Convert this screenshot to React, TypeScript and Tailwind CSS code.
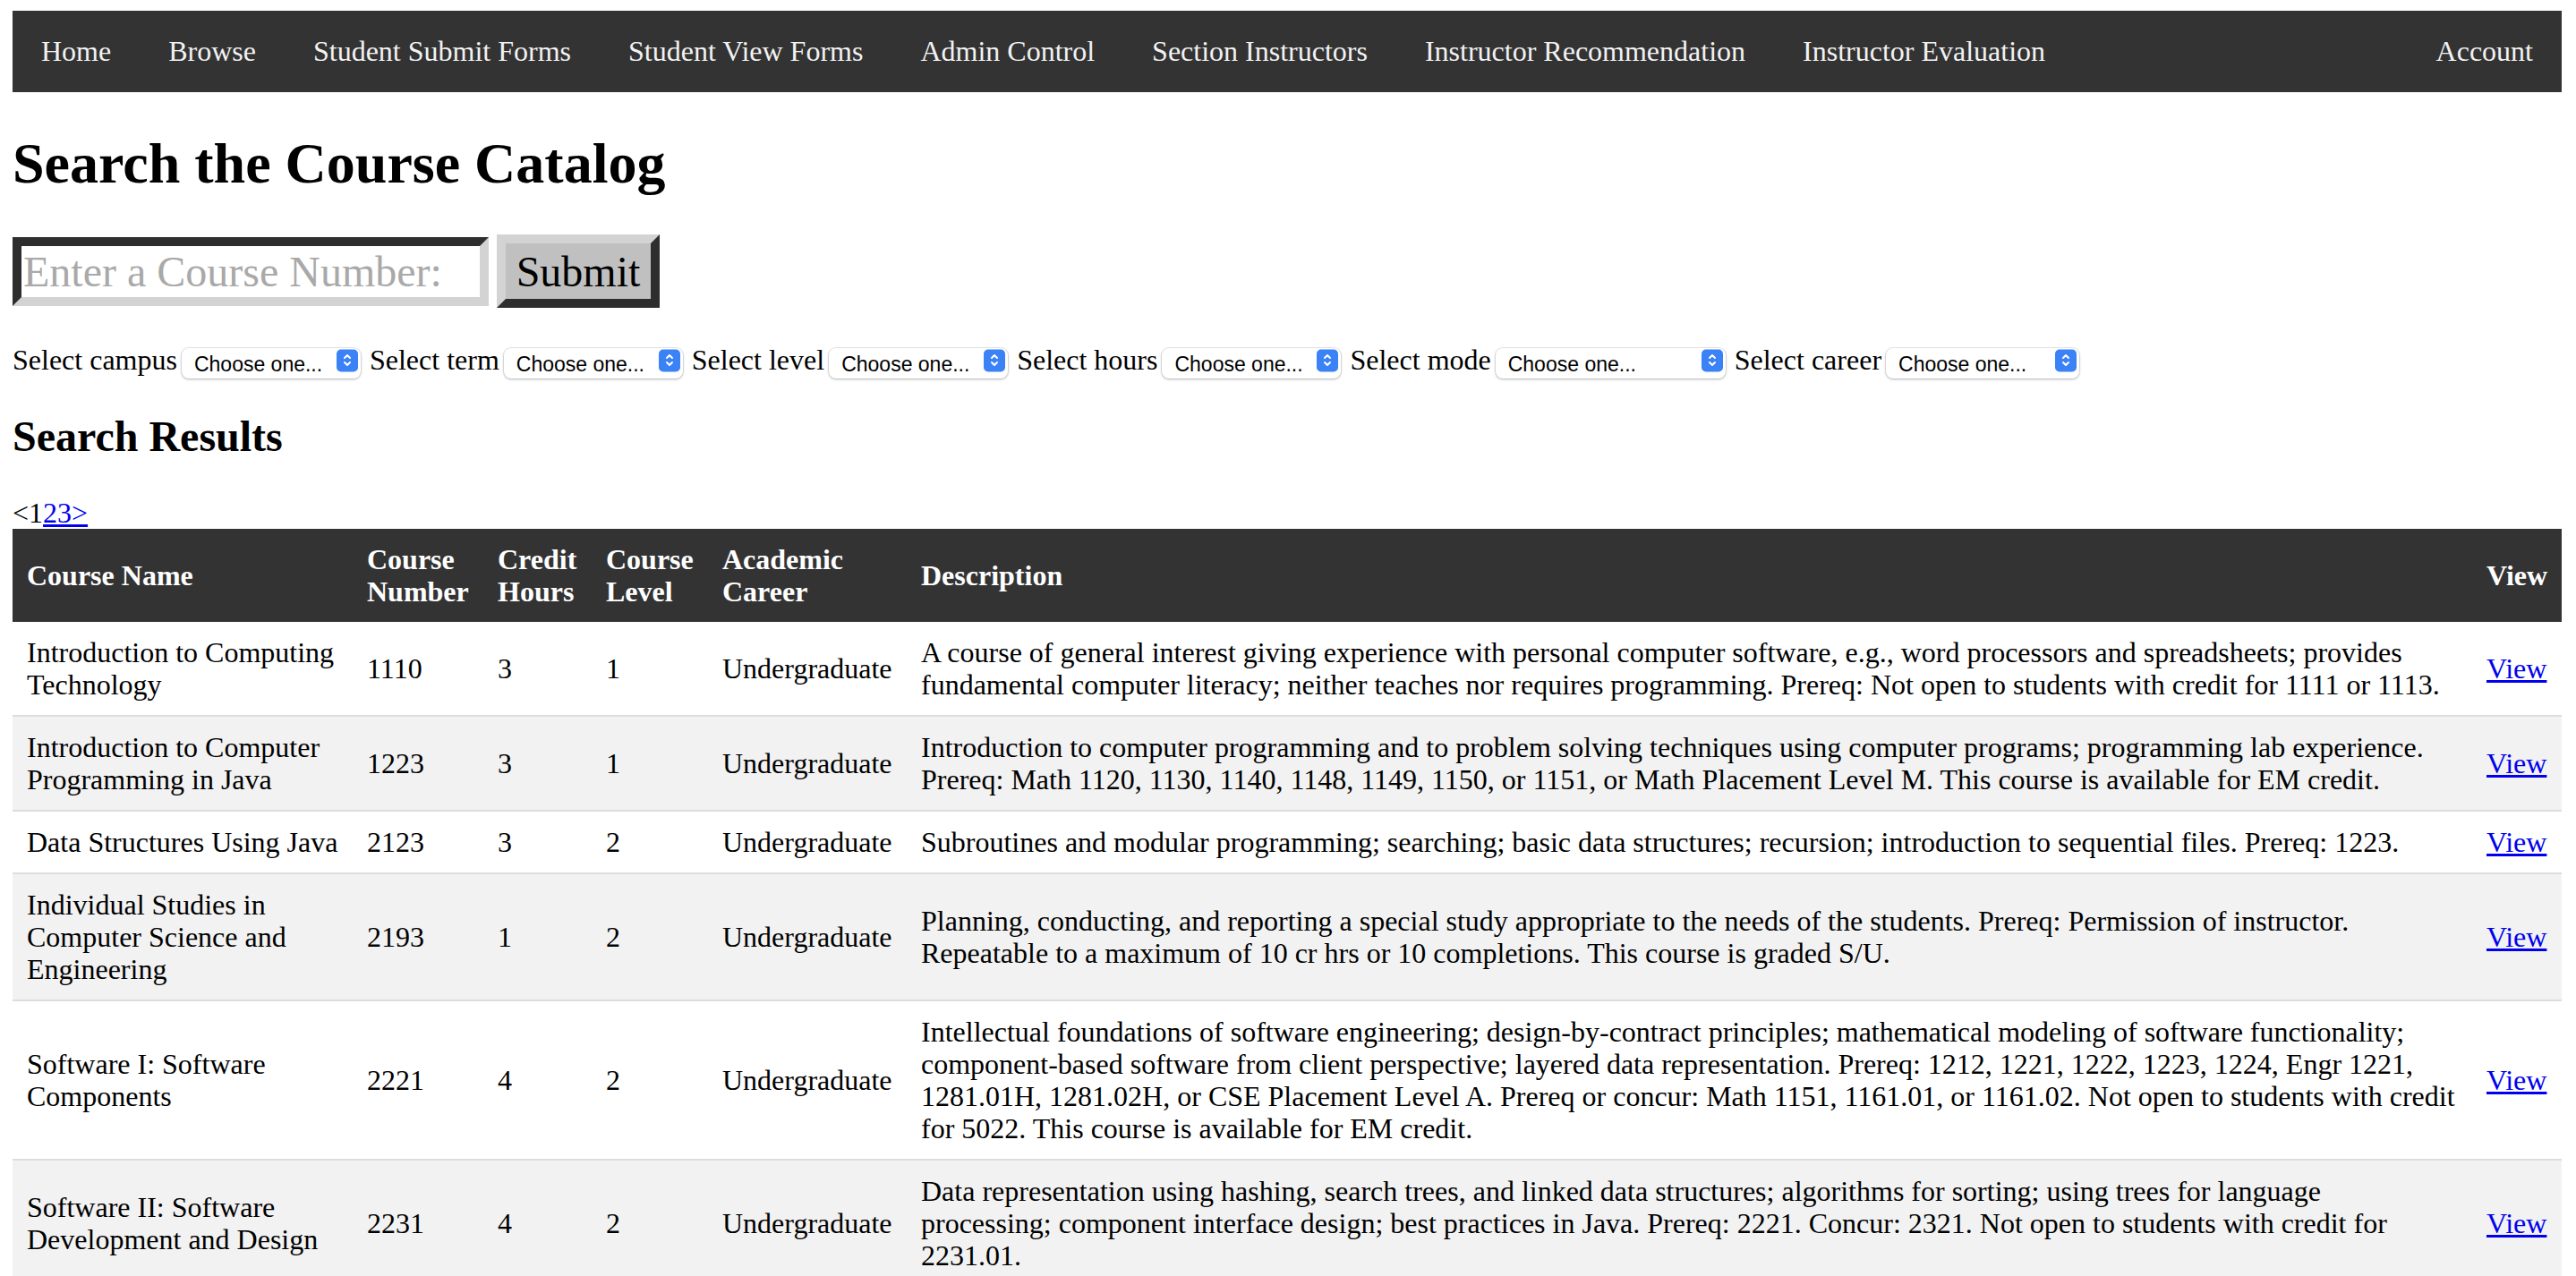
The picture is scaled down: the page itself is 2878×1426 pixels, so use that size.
import React from "react";

const navLinks = [
  "Home",
  "Browse",
  "Student Submit Forms",
  "Student View Forms",
  "Admin Control",
  "Section Instructors",
  "Instructor Recommendation",
  "Instructor Evaluation",
];

const filters = [
  { label: "Select campus", width: "w-[200px]" },
  { label: "Select term", width: "w-[200px]" },
  { label: "Select level", width: "w-[200px]" },
  { label: "Select hours", width: "w-[200px]" },
  { label: "Select mode", width: "w-[257px]" },
  { label: "Select career", width: "w-[216px]" },
];

const courses = [
  {
    name: "Introduction to Computing Technology",
    number: "1110",
    hours: "3",
    level: "1",
    career: "Undergraduate",
    description:
      "A course of general interest giving experience with personal computer software, e.g., word processors and spreadsheets; provides fundamental computer literacy; neither teaches nor requires programming. Prereq: Not open to students with credit for 1111 or 1113.",
  },
  {
    name: "Introduction to Computer Programming in Java",
    number: "1223",
    hours: "3",
    level: "1",
    career: "Undergraduate",
    description:
      "Introduction to computer programming and to problem solving techniques using computer programs; programming lab experience. Prereq: Math 1120, 1130, 1140, 1148, 1149, 1150, or 1151, or Math Placement Level M. This course is available for EM credit.",
  },
  {
    name: "Data Structures Using Java",
    number: "2123",
    hours: "3",
    level: "2",
    career: "Undergraduate",
    description:
      "Subroutines and modular programming; searching; basic data structures; recursion; introduction to sequential files. Prereq: 1223.",
  },
  {
    name: "Individual Studies in Computer Science and Engineering",
    number: "2193",
    hours: "1",
    level: "2",
    career: "Undergraduate",
    description:
      "Planning, conducting, and reporting a special study appropriate to the needs of the students. Prereq: Permission of instructor. Repeatable to a maximum of 10 cr hrs or 10 completions. This course is graded S/U.",
  },
  {
    name: "Software I: Software Components",
    number: "2221",
    hours: "4",
    level: "2",
    career: "Undergraduate",
    description:
      "Intellectual foundations of software engineering; design-by-contract principles; mathematical modeling of software functionality; component-based software from client perspective; layered data representation. Prereq: 1212, 1221, 1222, 1223, 1224, Engr 1221, 1281.01H, 1281.02H, or CSE Placement Level A. Prereq or concur: Math 1151, 1161.01, or 1161.02. Not open to students with credit for 5022. This course is available for EM credit.",
  },
  {
    name: "Software II: Software Development and Design",
    number: "2231",
    hours: "4",
    level: "2",
    career: "Undergraduate",
    description:
      "Data representation using hashing, search trees, and linked data structures; algorithms for sorting; using trees for language processing; component interface design; best practices in Java. Prereq: 2221. Concur: 2321. Not open to students with credit for 2231.01.",
  },
];

function SelectBox({ width }: { width: string }) {
  return (
    <div className={`relative h-[34px] ${width}`}>
      <select className="h-full w-full appearance-none rounded-[8px] bg-white pl-[14px] pr-[32px] font-['Liberation_Sans',Arial,sans-serif] text-[23px] text-black shadow-[0_0_0_1px_rgba(0,0,0,0.08),0_1px_3px_rgba(0,0,0,0.25)] outline-none">
        <option>Choose one...</option>
      </select>
      {/* blue up/down indicator */}
      <span className="pointer-events-none absolute right-[3px] top-1/2 flex h-[25px] w-[24px] -translate-y-1/2 items-center justify-center rounded-[5px] bg-[#3b82f7]">
        <svg width="20" height="22" viewBox="0 0 20 22" fill="none" stroke="white" strokeWidth="2" strokeLinecap="round" strokeLinejoin="round">
          <path d="M7 8.5l3-3 3 3" />
          <path d="M7 13.5l3 3 3-3" />
        </svg>
      </span>
    </div>
  );
}

export default function App() {
  return (
    <div className="min-h-screen bg-white pt-[12px] pl-[14px] pr-[16px] font-['Liberation_Serif','Times_New_Roman',serif] text-[32px] text-black">
      {/* Top nav */}
      <nav className="flex bg-[#333333] text-[#f2f2f2]">
        {navLinks.map((l) => (
          <a key={l} className="px-[32px] py-[27px] leading-[37px]">
            {l}
          </a>
        ))}
        <a className="ml-auto px-[32px] py-[27px] leading-[37px]">Account</a>
      </nav>

      <h1 className="mt-[43px] mb-[42px] text-[64px] font-bold leading-[74px]">Search the Course Catalog</h1>

      {/* Search form */}
      <form className="flex items-center gap-[9px]">
        <input
          placeholder="Enter a Course Number:"
          className="h-[77px] w-[532px] border-[10px] border-t-[#2e2e2e] border-l-[#2e2e2e] border-b-[#d3d3d3] border-r-[#d3d3d3] bg-white px-[2px] text-[48px] outline-none placeholder:text-[#a9a9a9]"
        />
        <button
          type="button"
          className="h-[82px] w-[182px] border-[10px] border-t-[#d3d3d3] border-l-[#d3d3d3] border-b-[#2e2e2e] border-r-[#2e2e2e] bg-[#c0c0c0] text-[48px] leading-[55px]"
        >
          Submit
        </button>
      </form>

      {/* Filters */}
      <div className="mt-[40px] flex h-[37px] items-center gap-[10px] leading-[37px]">
        {filters.map((f) => (
          <div key={f.label} className="flex items-center gap-[5px]">
            <span>{f.label}</span>
            <SelectBox width={f.width} />
          </div>
        ))}
      </div>

      <h2 className="mt-[39px] mb-[40px] text-[48px] font-bold leading-[55px]">Search Results</h2>

      {/* Pagination */}
      <div className="leading-[36px]">
        &lt;1
        <a className="text-[#0000ee] underline">2</a>
        <a className="text-[#0000ee] underline">3</a>
        <a className="text-[#0000ee] underline">&gt;</a>
      </div>

      {/* Results table */}
      <table className="w-full table-fixed border-collapse leading-[36px]">
        <colgroup>
          <col className="w-[380px]" />
          <col className="w-[146px]" />
          <col className="w-[121px]" />
          <col className="w-[130px]" />
          <col className="w-[222px]" />
          <col />
          <col className="w-[100px]" />
        </colgroup>
        <thead>
          <tr className="bg-[#333333] text-white">
            <th className="p-[16px] text-left font-bold">Course Name</th>
            <th className="p-[16px] text-left font-bold">Course Number</th>
            <th className="p-[16px] text-left font-bold">Credit Hours</th>
            <th className="p-[16px] text-left font-bold">Course Level</th>
            <th className="p-[16px] text-left font-bold">Academic Career</th>
            <th className="p-[16px] text-left font-bold">Description</th>
            <th className="p-[16px] text-left font-bold">View</th>
          </tr>
        </thead>
        <tbody>
          {courses.map((c, i) => (
            <tr key={c.number} className={`border-b-[2px] border-[#dddddd] ${i % 2 === 1 ? "bg-[#f2f2f2]" : "bg-white"}`}>
              <td className="p-[16px] align-middle">{c.name}</td>
              <td className="p-[16px] align-middle">{c.number}</td>
              <td className="p-[16px] align-middle">{c.hours}</td>
              <td className="p-[16px] align-middle">{c.level}</td>
              <td className="p-[16px] align-middle">{c.career}</td>
              <td className="p-[16px] align-middle">{c.description}</td>
              <td className="p-[16px] align-middle">
                <a className="text-[#0000ee] underline">View</a>
              </td>
            </tr>
          ))}
        </tbody>
      </table>
    </div>
  );
}
